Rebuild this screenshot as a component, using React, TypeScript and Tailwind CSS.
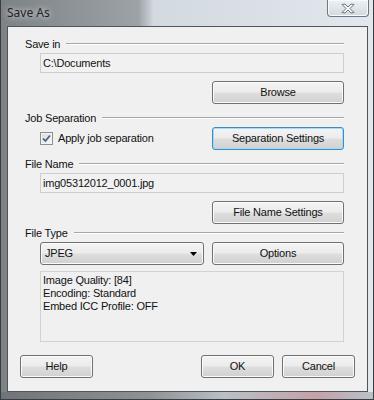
import React from 'react';

const font = "font-['Liberation_Sans',Arial,sans-serif] text-[11px] tracking-[-0.2px] text-[#111]";

const Btn: React.FC<{ label: string; className?: string; focused?: boolean }> = ({ label, className = '', focused }) => (
  <div
    className={`flex items-center justify-center rounded-[3px] border ${
      focused
        ? 'border-[#3c8dbd] shadow-[inset_0_0_0_1px_#a6dbf5]'
        : 'border-[#707070] shadow-[inset_0_0_0_1px_#fbfbfb]'
    } bg-[linear-gradient(180deg,#f3f3f3_0%,#ececec_48%,#dedede_52%,#d0d0d0_100%)] ${className}`}
  >
    <span className={font}>{label}</span>
  </div>
);

const GroupHeader: React.FC<{ label: string; className?: string }> = ({ label, className = '' }) => (
  <div className={`flex items-center h-[14px] ${className}`}>
    <span className={font}>{label}</span>
    <div className="flex-1 ml-[6px] h-[2px] border-t border-t-[#a7a7a7] border-b border-b-white" />
  </div>
);

const Field: React.FC<{ value: string; className?: string }> = ({ value, className = '' }) => (
  <div className={`ml-[15px] h-[20px] border border-[#cdcdcd] bg-[#f1f1f1] flex items-center pl-[2px] ${className}`}>
    <span className={font}>{value}</span>
  </div>
);

export default function App() {
  return (
    <div className="w-[374px] h-[400px] overflow-hidden flex flex-col border-l border-r border-[#3a3d40] bg-[linear-gradient(90deg,#7d8286_0%,#9da2a6_37%,#d2d9df_41%,#e2e8ed_100%)]">
      {/* title bar */}
      <div className="relative h-[26px] shrink-0">
        <span className="absolute left-[6px] top-[4px] font-['Noto_Sans',sans-serif] text-[12px] text-[#1f2326] [text-shadow:0_0_6px_#ffffff]">
          Save As
        </span>
        <div className="absolute left-[326px] top-0 w-[42px] h-[17px] rounded-b-[4px] border border-t-0 border-[#6e7883] bg-[linear-gradient(180deg,#eef2f5_0%,#dfe5ea_50%,#d2d9df_100%)] shadow-[inset_0_0_0_1px_#f7f9fb] flex items-center justify-center">
          <svg width="14" height="11" viewBox="0 0 14 11">
            <path
              d="M1 1.5 L4 1 L7 4 L10 1 L13 1.5 L9 5.5 L13 9.5 L10 10 L7 7 L4 10 L1 9.5 L5 5.5 Z"
              fill="#f4f6f8"
              stroke="#5d666f"
              strokeWidth="0.9"
              strokeLinejoin="round"
            />
          </svg>
        </div>
      </div>

      {/* client area */}
      <div className="ml-[6px] w-[361px] h-[366px] shrink-0 border border-[#505559] bg-[#f0f0f0] flex flex-col pt-[10px]">
        <div className="pl-[17px] pr-[23px] flex flex-col">
          <GroupHeader label="Save in" />
          <Field value="C:\Documents" className="mt-[2px]" />
          <Btn label="Browse" className="self-end mt-[8px] w-[132px] h-[23px]" />

          <GroupHeader label="Job Separation" className="mt-[7px]" />
          <div className="flex items-center justify-between mt-[2px] ml-[15px]">
            <div className="flex items-center">
              <div className="w-[13px] h-[13px] border border-[#8e8f8f] bg-[linear-gradient(135deg,#dcdcdc_0%,#f6f6f6_100%)] shadow-[inset_0_0_0_1px_#f4f4f4] flex items-center justify-center">
                <svg width="11" height="11" viewBox="0 0 11 11">
                  <path d="M2 5.5 L4.4 8 L9 2.5" fill="none" stroke="#4a5f8c" strokeWidth="1.8" />
                </svg>
              </div>
              <span className={`${font} ml-[5px]`}>Apply job separation</span>
            </div>
            <Btn label="Separation Settings" focused className="w-[132px] h-[23px]" />
          </div>

          <GroupHeader label="File Name" className="mt-[7px]" />
          <Field value="img05312012_0001.jpg" className="mt-[2px]" />
          <Btn label="File Name Settings" className="self-end mt-[8px] w-[132px] h-[23px]" />

          <GroupHeader label="File Type" className="mt-[2px]" />
          <div className="flex items-center justify-between mt-[2px] ml-[15px]">
            <div className="w-[164px] h-[23px] rounded-[3px] border border-[#707070] shadow-[inset_0_0_0_1px_#fbfbfb] bg-[linear-gradient(180deg,#f3f3f3_0%,#ececec_48%,#dedede_52%,#d0d0d0_100%)] flex items-center justify-between pl-[4px] pr-[6px]">
              <span className={font}>JPEG</span>
              <svg width="7" height="4" viewBox="0 0 7 4">
                <path d="M0 0 L7 0 L3.5 4 Z" fill="#000" />
              </svg>
            </div>
            <Btn label="Options" className="w-[132px] h-[23px]" />
          </div>

          <div className="ml-[15px] mt-[6px] h-[71px] border border-[#d2d2d2] bg-[#f0f0f0] pl-[2px] pt-[2px] flex flex-col">
            <span className={`${font} leading-[13px]`}>Image Quality: [84]</span>
            <span className={`${font} leading-[13px]`}>Encoding: Standard</span>
            <span className={`${font} leading-[13px]`}>Embed ICC Profile: OFF</span>
          </div>
        </div>

        <div className="flex justify-between px-[12px] mt-[13px]">
          <Btn label="Help" className="w-[73px] h-[23px]" />
          <div className="flex gap-[8px]">
            <Btn label="OK" className="w-[73px] h-[23px]" />
            <Btn label="Cancel" className="w-[73px] h-[23px]" />
          </div>
        </div>
      </div>

      {/* bottom frame */}
      <div className="flex-1 bg-[linear-gradient(90deg,#6f7478_0%,#8d9296_40%,#b9c0c6_60%,#c7a0a8_85%,#b8c2ca_100%)] border-b border-[#3a3d40]" />
    </div>
  );
}
